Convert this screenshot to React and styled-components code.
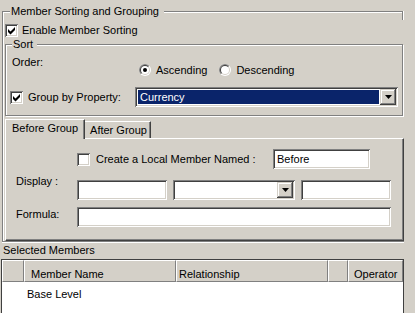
import styled, { createGlobalStyle } from "styled-components";

const GlobalStyle = createGlobalStyle`
  html, body { margin: 0; padding: 0; background: #d4d0c8; }
  body {
    font-family: "Liberation Sans", Arial, sans-serif;
    font-size: 11px;
    line-height: 13px;
    color: #000;
  }
`;

const Screen = styled.div`
  width: 415px;
  height: 313px;
  overflow: hidden;
  display: flex;
  flex-direction: column;
`;

// etched group box (grey line + white line)
const OuterGroup = styled.fieldset`
  position: relative;
  box-sizing: border-box;
  width: 402px;
  min-width: 0;
  margin: 5px 0 0 2px;
  padding: 0 0 0 2px;
  border: 1px solid #808080;
  border-right: none;
  box-shadow: inset 1px 1px 0 #fff, 0 1px 0 #fff;
  &::after {
    content: "";
    position: absolute;
    right: 0;
    top: -7px;
    width: 1px;
    height: 9px;
    border-left: 1px solid #808080;
    background: #fff;
  }
`;

const SortGroup = styled.fieldset`
  box-sizing: border-box;
  width: 398px;
  min-width: 0;
  margin: 1px 0 0 0;
  padding: 0 0 8px 0;
  border: 1px solid #808080;
  box-shadow: inset 1px 1px 0 #fff, 1px 1px 0 #fff;
`;

const Legend = styled.legend`
  margin-left: ${(p) => p.$ml}px;
  padding: 0 ${(p) => p.$pr}px 0 1px;
  background: #d4d0c8;
  line-height: 13px;
`;

const CheckRow = styled.label`
  display: flex;
  align-items: center;
  gap: ${(p) => p.$gap || 5}px;
  margin-top: ${(p) => p.$mt || 0}px;
  margin-left: ${(p) => p.$ml || 0}px;
  height: ${(p) => p.$h || 13}px;
  width: ${(p) => (p.$w ? p.$w + "px" : "auto")};
  white-space: nowrap;
`;

const Box = styled.span`
  flex: none;
  width: 13px;
  height: 13px;
  background: #fff;
  box-shadow: inset 1px 1px 0 #808080, inset -1px -1px 0 #fff,
    inset 2px 2px 0 #404040, inset -2px -2px 0 #d4d0c8;
  svg { display: block; }
`;

function CheckBox({ checked }) {
  return (
    <Box>
      {checked && (
        <svg width="13" height="13" viewBox="0 0 13 13">
          <polygon points="3,5 5.5,7.5 10,3 10,6 5.5,10.5 3,8" fill="#000" />
        </svg>
      )}
    </Box>
  );
}

const RadioMark = styled.svg`
  flex: none;
  display: block;
`;

function Radio({ checked }) {
  return (
    <RadioMark width="12" height="12" viewBox="0 0 12 12">
      <circle cx="6" cy="6" r="6" fill="#fff" />
      <path d="M1.757 10.243 A6 6 0 0 1 10.243 1.757 Z" fill="#808080" />
      <circle cx="6" cy="6" r="5" fill="#d4d0c8" />
      <path d="M2.464 9.536 A5 5 0 0 1 9.536 2.464 Z" fill="#404040" />
      <circle cx="6" cy="6" r="4" fill="#fff" />
      {checked && <circle cx="6" cy="6" r="2" fill="#000" />}
    </RadioMark>
  );
}

const SortGrid = styled.div`
  display: grid;
  grid-template-columns: 123px 263px;
  row-gap: 11px;
  padding: 5px 0 0 6px;
`;

const Label = styled.span`
  display: block;
  margin-top: ${(p) => p.$mt || 0}px;
  width: ${(p) => (p.$w ? p.$w + "px" : "auto")};
  flex: none;
  white-space: nowrap;
`;

const RadioRow = styled.div`
  display: flex;
  gap: 12px;
  margin: 8px 0 0 4px;
`;

const RadioItem = styled.label`
  display: flex;
  align-items: center;
  gap: 5px;
  height: 12px;
`;

const Sunken = styled.div`
  box-sizing: border-box;
  width: ${(p) => p.$w}px;
  height: 20px;
  flex: none;
  display: flex;
  align-items: center;
  padding: 2px;
  background: #fff;
  box-shadow: inset 1px 1px 0 #808080, inset -1px -1px 0 #fff,
    inset 2px 2px 0 #404040, inset -2px -2px 0 #d4d0c8;
  margin-top: ${(p) => p.$mt || 0}px;
  margin-left: ${(p) => p.$ml || 0}px;
`;

const FieldText = styled.span`
  padding-left: 2px;
  flex: 1;
`;

const Selected = styled.span`
  flex: 1;
  align-self: stretch;
  margin: 1px 1px 1px 1px;
  padding-left: 2px;
  display: flex;
  align-items: center;
  background: #0a246a;
  color: #fff;
`;

const DropButton = styled.span`
  box-sizing: border-box;
  width: 16px;
  height: 16px;
  flex: none;
  margin-left: auto;
  display: flex;
  align-items: center;
  justify-content: center;
  background: #d4d0c8;
  box-shadow: inset -1px -1px 0 #404040, inset 1px 1px 0 #d4d0c8,
    inset -2px -2px 0 #808080, inset 2px 2px 0 #fff;
  svg { display: block; }
`;

function Arrow() {
  return (
    <DropButton>
      <svg width="7" height="4" viewBox="0 0 7 4">
        <path d="M0 0h7L3.5 4z" fill="#000" />
      </svg>
    </DropButton>
  );
}

const TabStrip = styled.div`
  display: flex;
  align-items: flex-end;
  height: 19px;
  margin-top: 3px;
  position: relative;
  z-index: 1;
`;

const Tab = styled.div`
  box-sizing: border-box;
  height: ${(p) => (p.$active ? 20 : 17)}px;
  margin-bottom: ${(p) => (p.$active ? -1 : 0)}px;
  padding: 2px ${(p) => (p.$active ? 6 : 3)}px 0 ${(p) => (p.$active ? 6 : 5)}px;
  background: #d4d0c8;
  border-top: 1px solid #fff;
  border-left: ${(p) => (p.$active ? "1px solid #fff" : "none")};
  border-right: 1px solid #404040;
  box-shadow: inset -1px 0 0 #808080;
  white-space: nowrap;
`;

const TabPanel = styled.div`
  box-sizing: border-box;
  width: 399px;
  padding: 10px 0 13px 10px;
  border-top: 1px solid #fff;
  border-left: 1px solid #fff;
  border-right: 1px solid #404040;
  border-bottom: 1px solid #404040;
  box-shadow: inset -1px -1px 0 #808080;
  display: flex;
  flex-direction: column;
`;

const FormRow = styled.div`
  display: flex;
  align-items: ${(p) => p.$align || "flex-start"};
  margin-top: ${(p) => p.$mt || 0}px;
`;

const Controls = styled.div`
  display: flex;
  gap: 6px;
  margin-top: ${(p) => p.$mt || 0}px;
`;

const Caption = styled.div`
  margin: 2px 0 0 3px;
`;

const List = styled.div`
  box-sizing: border-box;
  width: 403px;
  height: 80px;
  flex: none;
  margin: 2px 0 0 1px;
  background: #fff;
  border: 1px solid #404040;
`;

const Header = styled.div`
  display: grid;
  grid-template-columns: 22px 152px 152px 20px 1fr;
  height: 22px;
  background: #d4d0c8;
`;

const HeadCell = styled.div`
  box-sizing: border-box;
  border-top: 1px solid #fff;
  border-left: 1px solid #fff;
  border-right: 1px solid #808080;
  border-bottom: 1px solid #808080;
  padding: 7px 0 0 ${(p) => p.$pl || 0}px;
  white-space: nowrap;
  overflow: hidden;
`;

const ListRow = styled.div`
  padding: 6px 0 0 25px;
`;

export default function App() {
  return (
    <>
      <GlobalStyle />
      <Screen>
        <OuterGroup>
          <Legend $ml={5} $pr={5}>Member Sorting and Grouping</Legend>
          <CheckRow $mt={6} $gap={4}>
            <CheckBox checked />
            <span>Enable Member Sorting</span>
          </CheckRow>

          <SortGroup>
            <Legend $ml={6} $pr={4}>Sort</Legend>
            <SortGrid>
              <Label>Order:</Label>
              <RadioRow>
                <RadioItem>
                  <Radio checked />
                  Ascending
                </RadioItem>
                <RadioItem>
                  <Radio />
                  Descending
                </RadioItem>
              </RadioRow>
              <CheckRow $ml={-2} $h={20} $gap={5}>
                <CheckBox checked />
                <span>Group by Property:</span>
              </CheckRow>
              <Sunken $w={263}>
                <Selected>Currency</Selected>
                <Arrow />
              </Sunken>
            </SortGrid>
          </SortGroup>

          <TabStrip>
            <Tab $active>Before Group</Tab>
            <Tab>After Group</Tab>
          </TabStrip>
          <TabPanel>
            <FormRow $align="center">
              <Label $w={61} />
              <CheckRow $h={20} $gap={6} $w={196}>
                <CheckBox />
                <span>Create a Local Member Named :</span>
              </CheckRow>
              <Sunken $w={97}>
                <FieldText>Before</FieldText>
              </Sunken>
            </FormRow>
            <FormRow $mt={6}>
              <Label $w={61}>Display :</Label>
              <Controls $mt={5}>
                <Sunken $w={90} />
                <Sunken $w={122}>
                  <Arrow />
                </Sunken>
                <Sunken $w={90} />
              </Controls>
            </FormRow>
            <FormRow $mt={7}>
              <Label $w={61} $mt={1}>Formula:</Label>
              <Sunken $w={314} />
            </FormRow>
          </TabPanel>
        </OuterGroup>

        <Caption>Selected Members</Caption>
        <List>
          <Header>
            <HeadCell />
            <HeadCell $pl={6}>Member Name</HeadCell>
            <HeadCell $pl={2}>Relationship</HeadCell>
            <HeadCell />
            <HeadCell $pl={5}>Operator</HeadCell>
          </Header>
          <ListRow>Base Level</ListRow>
        </List>
      </Screen>
    </>
  );
}
